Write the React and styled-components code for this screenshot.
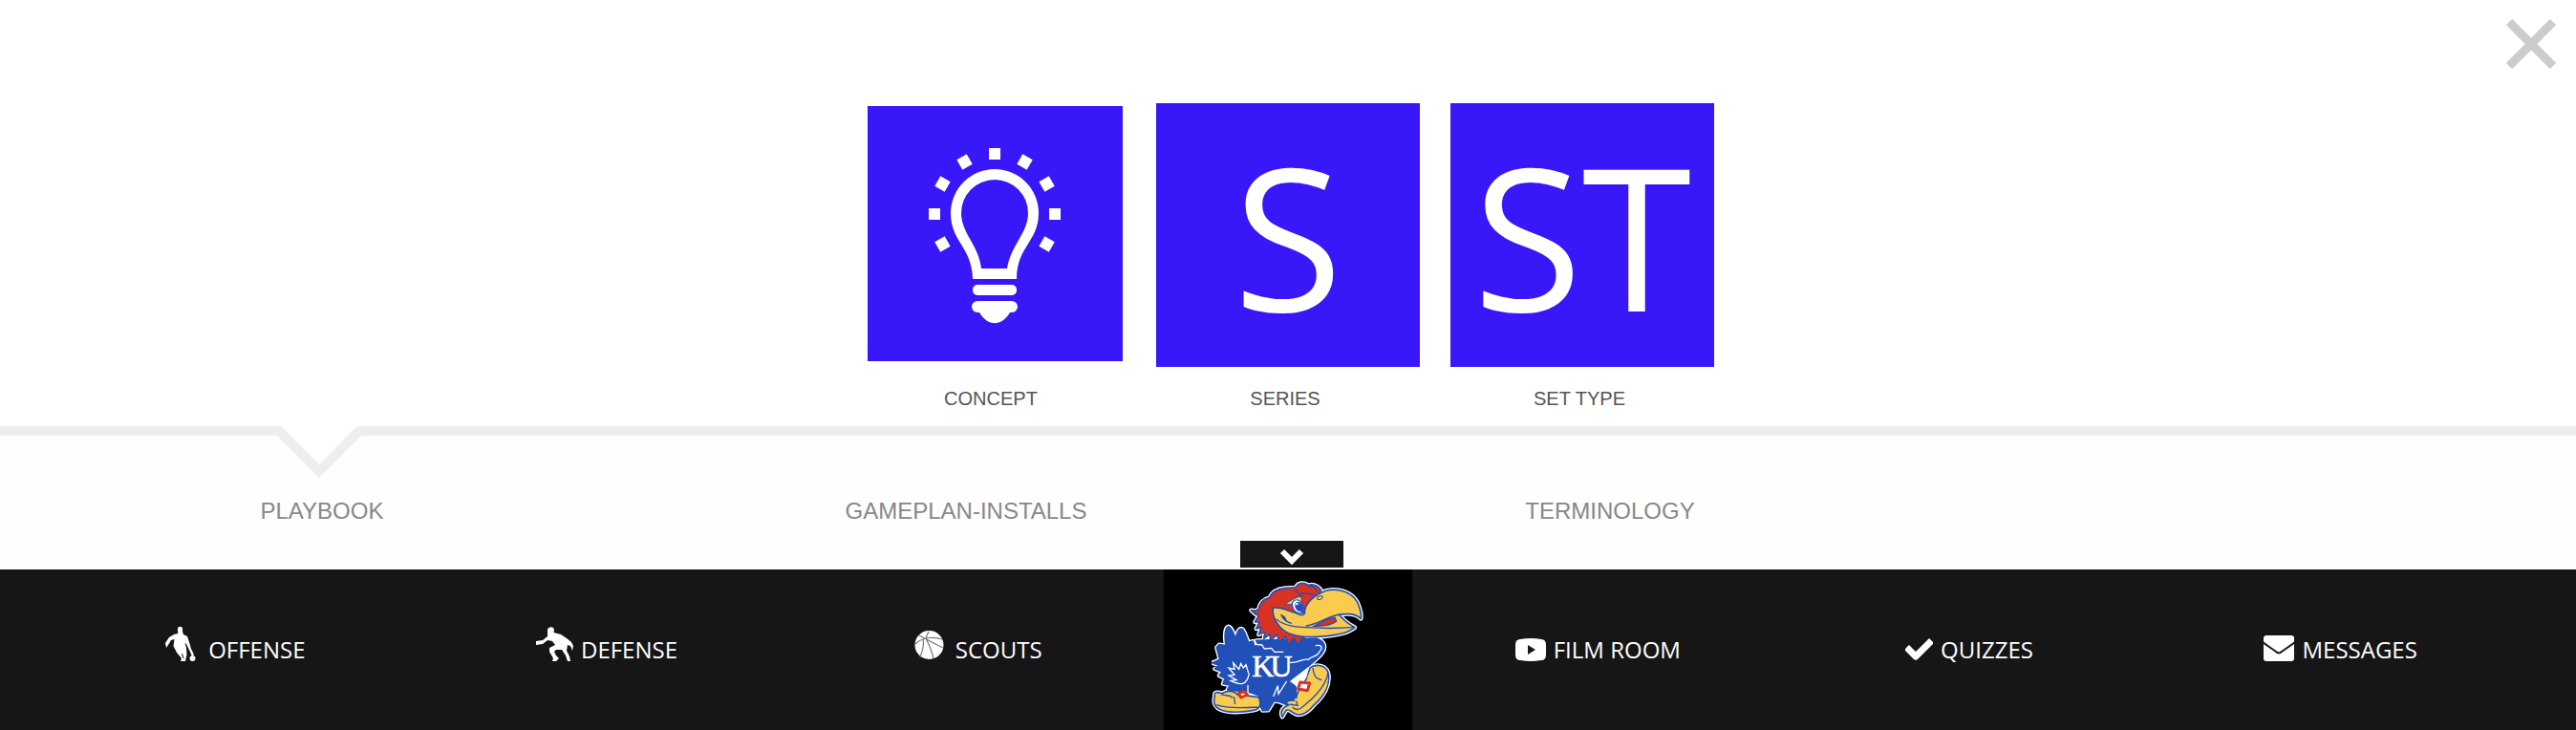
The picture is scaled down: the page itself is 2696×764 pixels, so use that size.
import React, { useState } from "react";
import styled, { createGlobalStyle } from "styled-components";

const GlobalStyle = createGlobalStyle`
  * {
    box-sizing: border-box;
  }
  body {
    margin: 0;
    background: #fefefe;
    font-family: "Liberation Sans", Arial, sans-serif;
  }
  a {
    color: inherit;
    text-decoration: none;
  }
  button {
    border: 0;
    padding: 0;
    cursor: pointer;
  }
`;

const BulbIcon = () => (
  <svg viewBox="0 0 267 267" aria-hidden="true">
    <g fill="#fff">
      <path
        fillRule="evenodd"
        d="M110 181 C109 147 87 142 87 112 A46 46 0 0 1 179 112 C179 142 156 147 156 181 Z M119 170 H146 C150 145 168 133 168 112 A35 35 0 0 0 98 112 C98 133 116 145 119 170 Z"
      />
      <rect x="110" y="187" width="46" height="11" rx="5" />
      <path d="M115 204 H151 A6 6 0 0 1 151 216 H149 C140 231 126 231 117 216 H115 A6 6 0 0 1 115 204 Z" />
      {[-120, -90, -60, -30, 0, 30, 60, 90, 120].map((angle) => (
        <rect
          key={angle}
          x="127"
          y="44"
          width="12"
          height="12"
          transform={`rotate(${angle} 133 113)`}
        />
      ))}
    </g>
  </svg>
);

const CloseIcon = () => (
  <svg width="52" height="52" viewBox="0 0 52 52" aria-hidden="true">
    <path d="M3 3 L49 49 M49 3 L3 49" stroke="#ccc" strokeWidth="9" />
  </svg>
);

const ChevronIcon = () => (
  <svg width="26" height="18" viewBox="0 0 26 18" aria-hidden="true">
    <path d="M3 4 L13 14 L23 4" fill="none" stroke="#fff" strokeWidth="6" />
  </svg>
);

const OffenseIcon = () => (
  <svg width="33" height="36" viewBox="0 0 33 36" aria-hidden="true">
    <g fill="#fff">
      <ellipse cx="15.500" cy="3" rx="2.600" ry="3.500" />
      <path d="M13.500 5 H18 L19 8 L23 10 L25 16 L27 23 L30 29 L28 31 L25 24 L22 18 L20.500 17 L22 22 L22.500 29 L21 36 H16 L17 33 L12 27 L8.500 20 L9.500 13 L6 14 L3 19 L1 22 L0 17 L4 11 L9 8 L13 7 Z" />
      <circle cx="28.500" cy="33" r="3" />
    </g>
    <path d="M17.500 28 L19 33" stroke="#161616" />
  </svg>
);

const DefenseIcon = () => (
  <svg width="39" height="36" viewBox="0 0 39 36" aria-hidden="true">
    <path
      fill="#fff"
      d="M12 3 C13 0 18 -1 19 3 L18.500 6 L26 8 L32 12 L37 16 L39 20 L38 25 L36 20 L33 19 L32 25 L35 31 L36 36 H33 L31 30 L27 24 L21 24 L19 26 L21 30 L24 33 L21 36 H17 L18 33 L14 26 L14 22 L20 19 L17 15 L12 14 L7 18 L0 19 V15 L7 14 L12 10 Z"
    />
  </svg>
);

const BallIcon = () => (
  <svg width="31" height="32" viewBox="0 0 31 32" aria-hidden="true">
    <circle cx="15.500" cy="15" r="15" fill="#fff" />
    <path
      d="M1 14 C8 7 20 6 29 9 M5 5 C13 9 21 14 30 18 M12 8 C15 14 18 20 20 29 M6 28 C9 20 10 13 9 9 M12 8 C13 5 14 3 15 1"
      fill="none"
      stroke="#777"
      strokeWidth="1.200"
    />
  </svg>
);

const FilmIcon = () => (
  <svg width="32" height="24" viewBox="0 0 32 24" aria-hidden="true">
    <path
      fill="#fff"
      fillRule="evenodd"
      d="M5 1 Q16 -1 27 1 Q32 1 32 7 V17 Q32 23 27 23 Q16 25 5 23 Q0 23 0 17 V7 Q0 1 5 1 Z M13 7 V17 L21 12 Z"
    />
  </svg>
);

const CheckIcon = () => (
  <svg width="29" height="24" viewBox="0 0 29 24" aria-hidden="true">
    <path
      d="M4 12 L11 19 L25 5"
      fill="none"
      stroke="#fff"
      strokeWidth="7"
      strokeLinecap="square"
      strokeLinejoin="round"
    />
  </svg>
);

const MailIcon = () => (
  <svg width="32" height="27" viewBox="0 0 32 27" aria-hidden="true">
    <rect width="32" height="27" rx="3" fill="#fff" />
    <path
      d="M-1 7 C4 11 9 14 13 17 Q16 20 19 17 C23 14 28 11 33 7"
      fill="none"
      stroke="#161616"
      strokeWidth="2"
    />
  </svg>
);

const blue = "#2050b8";
const red = "#d83222";
const yellow = "#f9cb4e";

const shapes = [
  {
    fill: blue,
    d: "M140 190 L330 184 C356 192 360 210 348 228 C330 254 290 280 246 316 C262 328 270 340 264 352 L280 374 L258 370 L262 388 L242 380 L236 392 L212 382 L196 380 L178 409 L160 410 L150 388 L148 362 L118 352 L50 345 L58 330 L36 326 L42 309 L24 300 L34 288 L10 279 L22 268 L2 260 L26 250 L16 212 L24 203 L45 206 C40 175 42 148 54 146 C64 150 70 168 76 186 C80 160 88 148 98 155 C108 168 110 184 116 196 L130 192 L134 208 L148 206 Z",
  },
  {
    fill: yellow,
    d: "M10 365 C6 350 20 352 32 356 C56 344 74 350 84 362 L118 364 L148 368 C158 390 152 406 132 409 C92 416 56 418 30 408 C10 400 4 384 10 365 Z",
  },
  {
    fill: yellow,
    d: "M310 275 C330 262 358 268 366 290 C376 330 350 368 320 394 C300 420 276 428 262 420 C248 414 242 402 234 410 L222 430 C214 414 222 400 242 392 C228 384 236 378 260 378 C248 362 252 370 266 370 C268 340 296 330 300 300 Z",
  },
  {
    fill: red,
    d: "M124 95 C134 98 142 96 148 91 C150 72 165 60 182 55 C188 38 205 28 232 25 C248 23 258 26 266 22 C270 9 288 6 304 16 C322 11 334 18 344 32 L300 130 L296 178 L285 184 L270 204 L258 182 L243 204 L232 178 L212 196 L206 172 L184 190 L184 170 L164 184 L168 164 L148 171 L156 150 L140 153 L151 132 L136 132 L148 112 L138 108 Z",
  },
  {
    fill: yellow,
    d: "M193 88 C212 80 240 98 268 104 L292 103 C292 72 325 46 360 33 C400 24 440 38 458 70 C466 88 472 105 469 122 C455 106 430 104 400 109 C412 124 430 138 450 149 C430 168 380 177 320 179 C270 180 235 172 215 148 C198 128 190 105 193 88 Z",
  },
];

const MascotLogo = () => (
  <svg width="160" height="146" viewBox="0 0 480 438" role="img" aria-label="KU">
    {shapes.map(({ d }) => (
      <path key={d} d={d} fill="#fff" stroke="#fff" strokeWidth="13" strokeLinejoin="round" />
    ))}
    {shapes.map(({ d, fill }) => (
      <path key={d} d={d} fill={fill} stroke={blue} strokeWidth="5" strokeLinejoin="round" />
    ))}
    <path d="M246 318 L306 272 L298 306 L270 336 Z" fill="#fff" />
    <path
      d="M322 145 C345 130 366 120 387 118 L392 130 C376 142 350 146 322 145 Z"
      fill={red}
      stroke={blue}
      strokeWidth="4"
    />
    <g fill="none" stroke={blue} strokeWidth="4">
      <path d="M203 122 C222 143 260 148 300 149 C345 152 400 152 446 149 M294 103 C285 118 270 108 262 100" />
      <path d="M218 108 C224 124 234 132 252 136 M296 144 C330 140 366 114 402 108" />
      <path d="M230 76 C248 73 260 50 282 50 C280 44 266 38 262 30 M278 46 C294 32 308 52 328 44 M304 18 C322 20 330 28 330 40" />
      <path d="M16 392 C58 408 110 398 150 400 M30 358 C44 366 56 358 66 370 M70 366 L74 390" />
      <path d="M366 290 C360 330 322 370 286 398 C276 410 262 408 254 400 M318 276 C322 310 334 310 346 314 M244 390 L270 394 L266 380" />
    </g>
    <ellipse cx="340" cy="56" rx="9" ry="5" fill={yellow} stroke={blue} strokeWidth="3" transform="rotate(-18 340 56)" />
    <path d="M232 75 C246 66 260 56 276 52 C286 56 282 66 280 70 L258 66 L248 78 Z" fill={yellow} stroke={blue} strokeWidth="3" />
    <ellipse cx="271" cy="83" rx="16" ry="22" fill="#fff" stroke={blue} strokeWidth="3" transform="rotate(-28 271 83)" />
    <ellipse cx="275" cy="84" rx="12" ry="17" fill={blue} transform="rotate(-28 275 84)" />
    <circle cx="268" cy="75" r="4" fill="#fff" />
    <path d="M218 108 C220 118 228 128 238 130 L230 114 Z" fill={blue} />
    <g fill="none" stroke="#fff" strokeWidth="4">
      <path d="M140 202 L158 204 L166 216 L188 214 L198 226 L226 226 M246 260 C286 258 282 246 304 250 C312 238 330 244 338 226 C352 210 344 202 326 206" />
      <path d="M118 292 C112 334 88 330 60 316 L78 314 L54 300 L72 298 L54 276 L72 280 L68 260 L86 280 L92 262 L100 276 L108 266 L116 292" />
      <path d="M194 366 L208 332 L210 358 L236 318 M114 330 V358" />
    </g>
    <g stroke={red} strokeWidth="9" fill="#fff" strokeLinejoin="round">
      <path d="M278 321 L308 324 L301 347 L272 342 Z" />
      <path d="M84 357 L102 350 L112 360 L93 369 Z" />
    </g>
    <text
      x="127"
      y="304"
      dx="0 -12"
      fontFamily="Liberation Serif, serif"
      fontSize="96"
      fill="#fff"
      stroke="#fff"
      strokeWidth="2"
    >
      KU
    </text>
  </svg>
);

const cards = [
  { label: "CONCEPT", icon: <BulbIcon /> },
  { label: "SERIES", letters: "S" },
  { label: "SET TYPE", letters: "ST" },
];

const tabs = ["PLAYBOOK", "GAMEPLAN-INSTALLS", "TERMINOLOGY"];

const leftLinks = [
  { label: "OFFENSE", icon: <OffenseIcon />, wide: true },
  { label: "DEFENSE", icon: <DefenseIcon /> },
  { label: "SCOUTS", icon: <BallIcon />, wide: true },
];

const rightLinks = [
  { label: "FILM ROOM", icon: <FilmIcon /> },
  { label: "QUIZZES", icon: <CheckIcon /> },
  { label: "MESSAGES", icon: <MailIcon /> },
];

const App = () => {
  const [open, setOpen] = useState(true);

  const renderLink = ({ label, icon, wide }) => (
    <BarLink href="#" key={label} $wide={wide}>
      {icon}
      <span>{label}</span>
    </BarLink>
  );

  return (
    <>
      <GlobalStyle />
      {open && (
        <Panel>
          <CloseButton type="button" aria-label="Close" onClick={() => setOpen(false)}>
            <CloseIcon />
          </CloseButton>
          <Cards>
            {cards.map(({ label, letters, icon }) => (
              <Card href="#" key={label}>
                <TileSlot>
                  <Tile $small={!!icon}>{icon || letters}</Tile>
                </TileSlot>
                <CardLabel>{label}</CardLabel>
              </Card>
            ))}
          </Cards>
        </Panel>
      )}
      <Tabs>
        <Notch width="88" height="54" viewBox="0 0 88 54" aria-hidden="true">
          <path d="M4 0 H84 L44 40 Z" fill="#fff" />
          <path d="M0 0 H4 L44 40 L84 0 H88 V10 L44 54 L0 10 Z" fill="#eee" />
        </Notch>
        {tabs.map((tab) => (
          <a href="#" key={tab}>
            {tab}
          </a>
        ))}
        <Handle type="button" aria-label="Toggle menu" onClick={() => setOpen(!open)}>
          <ChevronIcon />
        </Handle>
      </Tabs>
      <BottomBar>
        {leftLinks.map(renderLink)}
        <Logo href="#">
          <MascotLogo />
        </Logo>
        {rightLinks.map(renderLink)}
      </BottomBar>
    </>
  );
};

export default App;

const Panel = styled.section`
  position: relative;
  background: #fff;
  padding: 108px 0 18px;
`;

const CloseButton = styled.button`
  position: absolute;
  top: 20px;
  right: 21px;
  background: none;
  svg {
    display: block;
  }
`;

const Cards = styled.div`
  display: grid;
  grid-template-columns: repeat(3, 308px);
  justify-content: center;
`;

const Card = styled.a`
  display: flex;
  flex-direction: column;
  align-items: center;
`;

const TileSlot = styled.div`
  height: 276px;
`;

const Tile = styled.div`
  display: flex;
  align-items: center;
  justify-content: center;
  width: ${({ $small }) => ($small ? "267px" : "276px")};
  height: ${({ $small }) => ($small ? "267px" : "276px")};
  margin: ${({ $small }) => ($small ? "3px 0 0 2px" : "0")};
  background: #3818f8;
  color: #fff;
  font-family: "Open Sans", sans-serif;
  font-size: 208px;
  line-height: 276px;
`;

const CardLabel = styled.span`
  padding: 22px 6px 0 0;
  color: #555;
  font-size: 20px;
  line-height: 22px;
`;

const Tabs = styled.nav`
  position: relative;
  display: grid;
  grid-template-columns: repeat(4, 1fr);
  align-items: center;
  height: 150px;
  border-top: 10px solid #eee;
  border-bottom: 2px solid #fefefe;
  padding-top: 20px;
  background: #fefefe;
  color: #888;
  font-size: 24px;
  line-height: 28px;
  text-align: center;
`;

const Notch = styled.svg`
  position: absolute;
  top: -10px;
  left: 12.4%;
  transform: translateX(-50%);
`;

const Handle = styled.button`
  position: absolute;
  bottom: 0;
  left: 50%;
  margin-left: -50px;
  width: 108px;
  height: 28px;
  background: #161616;
  svg {
    display: block;
    margin: 4px auto 0;
  }
`;

const BottomBar = styled.nav`
  display: grid;
  grid-template-columns: repeat(3, 1fr) 260px repeat(3, 1fr);
  align-items: center;
  height: 168px;
  padding: 0 52px;
  background: #161616;
  color: #fff;
`;

const BarLink = styled.a`
  display: flex;
  align-items: flex-end;
  justify-content: center;
  gap: ${({ $wide }) => ($wide ? "12px" : "8px")};
  height: 36px;
  margin-bottom: 12px;
  font-family: "Open Sans", sans-serif;
  font-size: 24px;
  line-height: 24px;
  white-space: nowrap;
`;

const Logo = styled.a`
  display: flex;
  align-items: center;
  justify-content: center;
  align-self: stretch;
  background: #000;
`;
